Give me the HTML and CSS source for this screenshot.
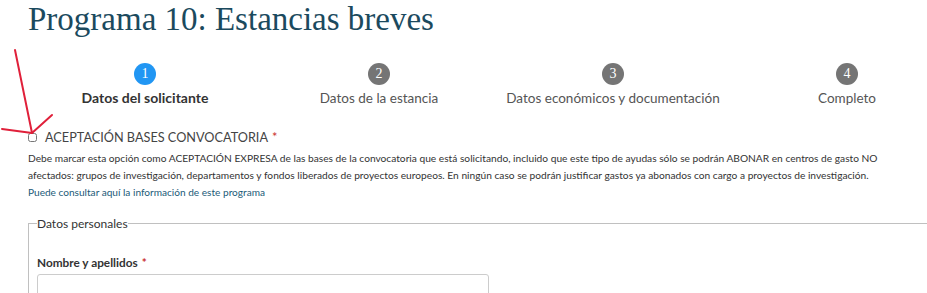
FILE: index.html
```html
<!DOCTYPE html>
<html lang="es">
<head>
<meta charset="utf-8">
<title>Programa 10: Estancias breves</title>
<link rel="stylesheet" href="styles.css">
</head>
<body>
<div class="page">
  <h1 class="title">Programa 10: Estancias breves</h1>
  <ol class="steps">
    <li class="step active"><span class="num">1</span><span class="label">Datos del solicitante</span></li>
    <li class="step"><span class="num">2</span><span class="label">Datos de la estancia</span></li>
    <li class="step"><span class="num">3</span><span class="label">Datos económicos y documentación</span></li>
    <li class="step"><span class="num">4</span><span class="label">Completo</span></li>
  </ol>
  <div class="accept">
    <label class="check-row"><input type="checkbox" class="check"><span class="check-label">ACEPTACIÓN BASES CONVOCATORIA</span><span class="req">*</span></label>
    <p class="help">Debe marcar esta opción como ACEPTACIÓN EXPRESA de las bases de la convocatoria que está solicitando, incluido que este tipo de ayudas sólo se podrán ABONAR en centros de gasto NO afectados: grupos de investigación, departamentos y fondos liberados de proyectos europeos. En ningún caso se podrán justificar gastos ya abonados con cargo a proyectos de investigación.</p>
    <a class="info-link" href="#">Puede consultar aquí la información de este programa</a>
  </div>
  <fieldset class="group">
    <legend class="legend">Datos personales</legend>
    <div class="field">
      <label class="field-label">Nombre y apellidos<span class="req">*</span></label>
      <input type="text" class="text-input">
    </div>
  </fieldset>
</div>
<svg class="annot" width="70" height="145" viewBox="0 0 70 145">
  <g stroke="#e0203a" stroke-width="2" stroke-linecap="round" fill="none">
    <line x1="15" y1="50" x2="32" y2="133"/>
    <line x1="2" y1="129" x2="32" y2="133"/>
    <line x1="52" y1="115" x2="32" y2="133"/>
  </g>
</svg>
</body>
</html>
```
FILE: styles.css
```css
html, body {
  margin: 0;
  padding: 0;
  background: #fff;
  overflow: hidden;
}
body {
  font-family: "Lato", "Open Sans", sans-serif;
  color: #333;
  position: relative;
}
.page {
  width: 936px;
  padding-left: 28px;
}
.title {
  font-family: "Liberation Serif", serif;
  font-weight: normal;
  font-size: 33px;
  line-height: 38px;
  color: #1b4a5e;
  margin: 0;
}
.steps {
  list-style: none;
  margin: 0;
  padding: 25px 0 0 0;
  display: grid;
  grid-template-columns: repeat(4, 1fr);
}
.step {
  display: flex;
  flex-direction: column;
  align-items: center;
}
.num {
  width: 22px;
  height: 22px;
  border-radius: 50%;
  background: #757575;
  color: #fff;
  font-family: "Liberation Serif", serif;
  font-size: 14px;
  line-height: 22px;
  text-align: center;
}
.step.active .num {
  background: #2196f3;
}
.label {
  margin-top: 4px;
  font-size: 13.5px;
  line-height: 18px;
  color: #555;
}
.step.active .label {
  color: #333;
  font-weight: bold;
  font-size: 14px;
}
.accept {
  margin-top: 21px;
}
.check-row {
  display: flex;
  align-items: center;
  font-size: 12.7px;
  line-height: 18px;
  color: #444;
}
.check {
  width: 9px;
  height: 9px;
  margin: 0 8px 0 0;
}
.req {
  color: #c9302c;
  margin-left: 4px;
}
.help {
  margin: 4px 0 0 0;
  font-size: 10.2px;
  line-height: 17px;
  color: #333;
  width: 880px;
}
.info-link {
  display: block;
  font-size: 10.1px;
  line-height: 17px;
  color: #1b5a78;
  text-decoration: none;
}
.group {
  margin: 15px 0 0 0;
  padding: 0 8px;
  border: 1px solid #c0c0c0;
  border-right: none;
}
.legend {
  padding: 0;
  font-size: 12px;
  color: #333;
}
.field {
  margin-top: 24px;
}
.field-label {
  display: block;
  font-size: 11.8px;
  font-weight: bold;
  color: #333;
  line-height: 16px;
}
.text-input {
  display: block;
  margin-top: 3px;
  width: 452px;
  height: 30px;
  box-sizing: border-box;
  border: 1px solid #ccc;
  border-radius: 3px;
}
.annot {
  position: absolute;
  left: 0;
  top: 0;
}
```
